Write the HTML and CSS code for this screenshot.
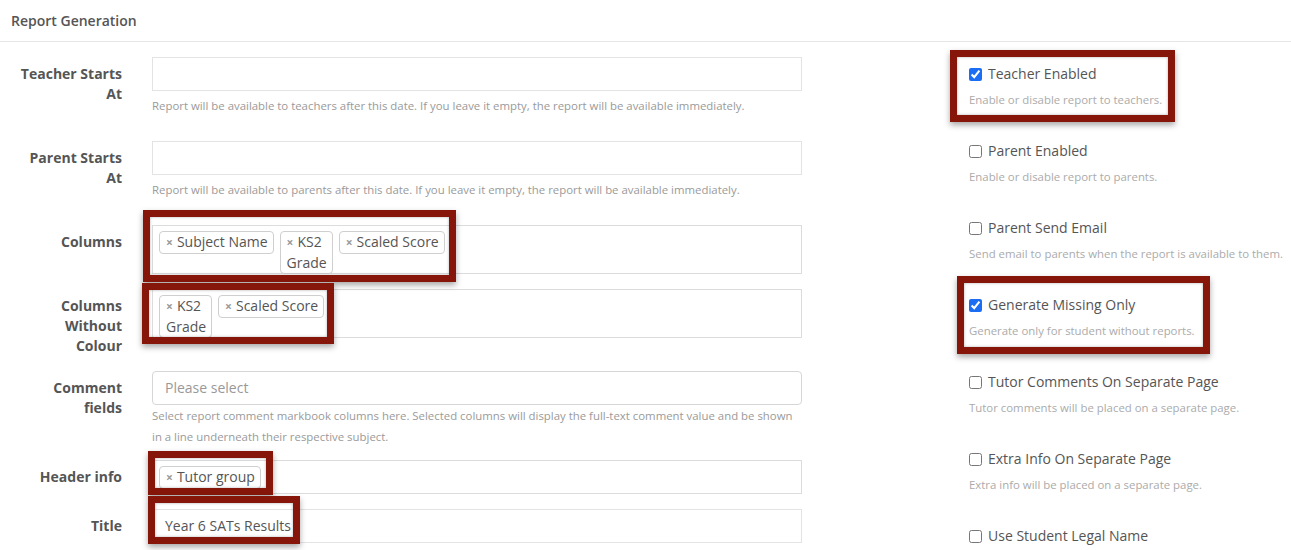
FILE: index.html
```html
<!DOCTYPE html>
<html lang="en">
<head>
<meta charset="utf-8">
<title>Report Generation</title>
<link rel="stylesheet" href="styles.css">
</head>
<body>
<div class="page">
  <div class="panel-heading">Report Generation</div>
  <div class="panel-body">
    <div class="form-left">
      <div class="form-group">
        <label class="control-label">Teacher Starts At</label>
        <div class="field">
          <div class="input"></div>
          <p class="help help-date">Report will be available to teachers after this date. If you leave it empty, the report will be available immediately.</p>
        </div>
      </div>
      <div class="form-group">
        <label class="control-label">Parent Starts At</label>
        <div class="field">
          <div class="input"></div>
          <p class="help help-date">Report will be available to parents after this date. If you leave it empty, the report will be available immediately.</p>
        </div>
      </div>
      <div class="form-group">
        <label class="control-label">Columns</label>
        <div class="field">
          <div class="select">
            <span class="tag"><span class="x">×</span>Subject Name</span>
            <span class="tag"><span class="x">×</span>KS2<br>Grade</span>
            <span class="tag"><span class="x">×</span>Scaled Score</span>
          </div>
        </div>
      </div>
      <div class="form-group">
        <label class="control-label">Columns Without Colour</label>
        <div class="field">
          <div class="select">
            <span class="tag"><span class="x">×</span>KS2<br>Grade</span>
            <span class="tag"><span class="x">×</span>Scaled Score</span>
          </div>
        </div>
      </div>
      <div class="form-group form-group-tight">
        <label class="control-label">Comment fields</label>
        <div class="field">
          <div class="input input-rounded"><span class="placeholder">Please select</span></div>
          <p class="help help-comment">Select report comment markbook columns here. Selected columns will display the full-text comment value and be shown in a line underneath their respective subject.</p>
        </div>
      </div>
      <div class="form-group">
        <label class="control-label">Header info</label>
        <div class="field">
          <div class="select">
            <span class="tag"><span class="x">×</span>Tutor group</span>
          </div>
        </div>
      </div>
      <div class="form-group">
        <label class="control-label">Title</label>
        <div class="field">
          <div class="input"><span class="value">Year 6 SATs Results</span></div>
        </div>
      </div>
    </div>

    <div class="form-right">
      <div class="check-item">
        <label class="check"><input type="checkbox" checked><span>Teacher Enabled</span></label>
        <p class="help help-check">Enable or disable report to teachers.</p>
      </div>
      <div class="check-item">
        <label class="check"><input type="checkbox"><span>Parent Enabled</span></label>
        <p class="help help-check">Enable or disable report to parents.</p>
      </div>
      <div class="check-item">
        <label class="check"><input type="checkbox"><span>Parent Send Email</span></label>
        <p class="help help-check">Send email to parents when the report is available to them.</p>
      </div>
      <div class="check-item">
        <label class="check"><input type="checkbox" checked><span>Generate Missing Only</span></label>
        <p class="help help-check">Generate only for student without reports.</p>
      </div>
      <div class="check-item">
        <label class="check"><input type="checkbox"><span>Tutor Comments On Separate Page</span></label>
        <p class="help help-check">Tutor comments will be placed on a separate page.</p>
      </div>
      <div class="check-item">
        <label class="check"><input type="checkbox"><span>Extra Info On Separate Page</span></label>
        <p class="help help-check">Extra info will be placed on a separate page.</p>
      </div>
      <div class="check-item">
        <label class="check"><input type="checkbox"><span>Use Student Legal Name</span></label>
      </div>
    </div>
  </div>

  <div class="annot annot-teacher"></div>
  <div class="annot annot-columns"></div>
  <div class="annot annot-nocolour"></div>
  <div class="annot annot-header"></div>
  <div class="annot annot-title"></div>
  <div class="annot annot-missing"></div>
</div>
</body>
</html>
```

FILE: styles.css
```css
* { box-sizing: border-box; }

html, body {
  margin: 0;
  padding: 0;
  background: #ffffff;
}

body {
  font-family: "Open Sans", "Liberation Sans", sans-serif;
  font-size: 14px;
  color: #555555;
  overflow: hidden;
}

.page {
  position: relative;
  width: 1291px;
  height: 550px;
  overflow: hidden;
}

.panel-heading {
  height: 42px;
  line-height: 41px;
  padding: 0 11px;
  font-size: 14px;
  font-weight: 600;
  color: #555555;
  border-bottom: 1px solid #e6e6e6;
}

.panel-body {
  display: flex;
  align-items: flex-start;
}

.form-left {
  width: 802px;
  padding: 15px 0 0 18px;
}

.form-group {
  display: grid;
  grid-template-columns: 104px 650px;
  column-gap: 30px;
  align-items: start;
  margin-bottom: 15px;
}

.form-group-tight {
  margin-bottom: 13px;
}

.control-label {
  padding-top: 7px;
  line-height: 20px;
  font-size: 14px;
  font-weight: 700;
  color: #555555;
  text-align: right;
}

.field {
  min-width: 0;
}

.input {
  height: 34px;
  border: 1px solid #e3e3e3;
  padding: 0 12px;
  line-height: 32px;
  font-size: 14px;
  color: #555555;
}

.input-rounded {
  border-color: #d6d6d6;
  border-radius: 4px;
}

.placeholder {
  color: #999999;
}

.select {
  display: flex;
  flex-wrap: wrap;
  align-items: flex-start;
  column-gap: 6px;
  min-height: 34px;
  border: 1px solid #dcdcdc;
  padding: 0 6px;
}

.tag {
  display: inline-block;
  margin: 5px 0 -1px;
  padding: 0 5px 0 6px;
  border: 1px solid #cfcfcf;
  border-radius: 4px;
  background: #ffffff;
  line-height: 20px;
  font-size: 14px;
  color: #555555;
}

.tag .x {
  display: inline-block;
  margin-right: 4px;
  font-size: 12px;
  font-weight: 700;
  color: #9a9a9a;
}

.help {
  margin: 0;
  font-size: 11.4px;
  line-height: 21px;
  color: #9a9a9a;
}

.help-date {
  margin: 4px 0 10px;
}

.help-comment {
  margin: 0;
}

.form-right {
  padding: 22px 0 0 167px;
}

.check-item {
  height: 77px;
}

.check {
  display: flex;
  align-items: center;
  gap: 6px;
  line-height: 20px;
  font-size: 14px;
  color: #555555;
}

.check input {
  width: 13px;
  height: 13px;
  margin: 0;
  accent-color: #1b6ef3;
}

.help-check {
  margin-top: 5px;
  color: #ababab;
}

.annot {
  position: absolute;
  border: 7px solid #86160a;
  box-shadow: 0 3px 6px rgba(0, 0, 0, 0.35), inset 0 0 3px rgba(0, 0, 0, 0.3);
  pointer-events: none;
}

.annot-teacher { left: 950px; top: 50px; width: 225px; height: 72px; }
.annot-columns { left: 143px; top: 210px; width: 313px; height: 72px; }
.annot-nocolour { left: 142px; top: 283px; width: 192px; height: 61px; }
.annot-header { left: 148px; top: 451px; width: 125px; height: 44px; }
.annot-title { left: 148px; top: 496px; width: 152px; height: 48px; }
.annot-missing { left: 957px; top: 276px; width: 253px; height: 78px; }
```
